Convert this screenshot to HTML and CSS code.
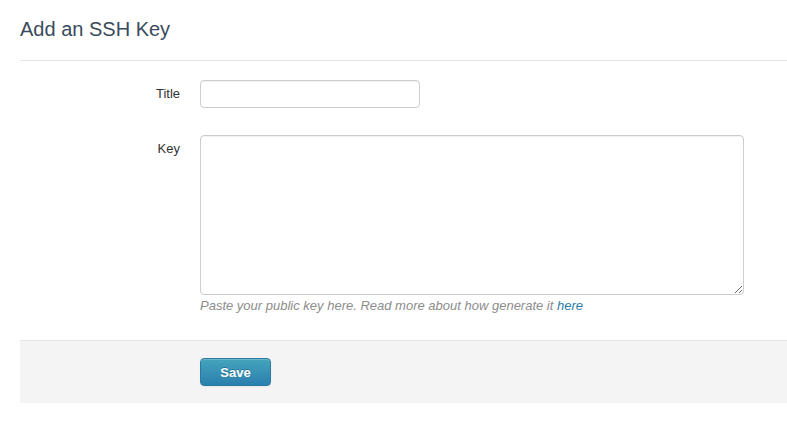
FILE: index.html
```html
<!DOCTYPE html>
<html>
<head>
<meta charset="utf-8">
<link rel="stylesheet" href="styles.css">
</head>
<body>
<div class="page">
  <div class="page-header">
    <h3 class="page-title">Add an SSH Key</h3>
  </div>
  <form class="form">
    <div class="row row-title">
      <label class="label">Title</label>
      <div class="controls">
        <input class="input" type="text">
      </div>
    </div>
    <div class="row row-key">
      <label class="label">Key</label>
      <div class="controls">
        <textarea class="textarea"></textarea>
        <p class="help">Paste your public key here. Read more about how generate it <a class="link" href="#">here</a></p>
      </div>
    </div>
    <div class="actions">
      <button class="btn" type="button">Save</button>
    </div>
  </form>
</div>
</body>
</html>
```
FILE: styles.css
```css
html, body {
  margin: 0;
  padding: 0;
  background: #fff;
}
body {
  font-family: "Liberation Sans", Arial, sans-serif;
  font-size: 13px;
  color: #333;
}
.page {
  padding-left: 20px;
}
.page-header {
  padding-top: 15px;
  padding-bottom: 17px;
  border-bottom: 1px solid #e5e5e5;
}
.page-title {
  margin: 0;
  font-size: 20px;
  line-height: 28px;
  font-weight: normal;
  color: #3a4b5c;
}
.form {
  margin: 0;
  padding-top: 19px;
}
.row {
  display: flex;
  align-items: flex-start;
  gap: 20px;
}
.row-key {
  margin-top: 27px;
}
.label {
  width: 160px;
  flex: none;
  text-align: right;
  line-height: 28px;
  font-size: 13px;
  color: #333;
}
.row-key .label {
  line-height: 27px;
}
.controls {
  display: flex;
  flex-direction: column;
}
.input {
  box-sizing: border-box;
  width: 220px;
  height: 28px;
  margin: 0;
  padding: 4px 6px;
  border: 1px solid #ccc;
  border-radius: 4px;
  font: inherit;
  box-shadow: inset 0 1px 1px rgba(0,0,0,0.06);
}
.textarea {
  box-sizing: border-box;
  display: block;
  width: 544px;
  height: 160px;
  margin: 0;
  padding: 4px 6px;
  border: 1px solid #ccc;
  border-radius: 4px;
  font: inherit;
  resize: both;
  box-shadow: inset 0 1px 1px rgba(0,0,0,0.06);
}
.help {
  margin: 2px 0 0;
  font-size: 13px;
  line-height: 18px;
  font-style: italic;
  color: #8c8c8c;
}
.link {
  color: #2a7ea5;
  text-decoration: none;
}
.actions {
  margin-top: 25px;
  padding: 17px 0 17px 180px;
  background: #f4f4f4;
  border-top: 1px solid #e5e5e5;
}
.btn {
  box-sizing: border-box;
  display: block;
  width: 71px;
  height: 28px;
  margin: 0;
  padding: 0;
  border: 1px solid #2b7ba0;
  border-radius: 4px;
  background: linear-gradient(#45a4bd, #2a7fae);
  color: #fff;
  font-family: "Liberation Sans", Arial, sans-serif;
  font-size: 13px;
  font-weight: bold;
  text-shadow: 0 -1px 0 rgba(0,0,0,0.25);
  box-shadow: inset 0 1px 0 rgba(255,255,255,0.2), 0 1px 2px rgba(0,0,0,0.05);
}
```
